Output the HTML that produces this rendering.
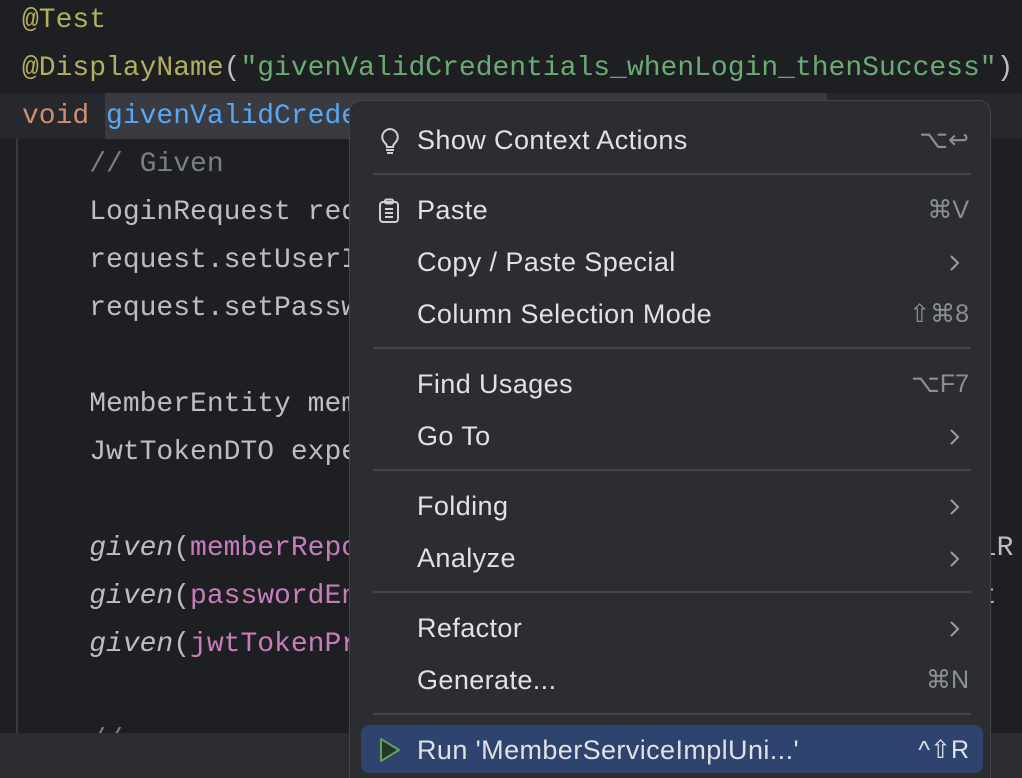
<!DOCTYPE html>
<html style="width:1022px;height:778px;overflow:hidden"><head><meta charset="utf-8"><style>
*{margin:0;padding:0;box-sizing:border-box}
body{width:1022px;height:778px;overflow:hidden;background:#1e1f22;position:relative;font-family:"Liberation Mono",monospace}
.ln{position:absolute;left:22px;height:48px;line-height:48px;font-size:28px;color:#bcbec4;white-space:pre;overflow:hidden;width:1000px}
.an{color:#b3ae60}.st{color:#6aab73}.kw{color:#cf8e6d}.fn{color:#56a8f5}.cm{color:#7a7e85}.pu{color:#c77dbb}.it{font-style:italic}
#menu{position:absolute;left:349px;top:100px;width:642px;height:678px;background:#2b2d30;border:1px solid #43454a;border-bottom:none;border-radius:12px 12px 0 0;font-family:"Liberation Sans",sans-serif}
.mi{position:absolute;left:0;width:640px;height:48px;line-height:48px;font-size:27px;letter-spacing:0.4px;color:#dfe1e5}
.mi .t{position:absolute;left:67px}
.mi .k{position:absolute;right:21px;color:#8c8f94;font-size:25px;letter-spacing:0}
.mi svg.ch{position:absolute;right:30px;top:15px}
.sep{position:absolute;left:23px;width:598px;height:2px;background:#43454a}
</style></head><body>
<div style="position:absolute;left:0;top:93px;width:1022px;height:46px;background:#26282e"></div>
<div style="position:absolute;left:105px;top:93px;width:722px;height:46px;background:#393b40"></div>
<div style="position:absolute;left:16px;top:139px;width:2px;height:594px;background:#393b40"></div>
<div class="ln" style="top:-3px"><span class="an">@Test</span></div>
<div class="ln" style="top:45px"><span class="an">@DisplayName</span>(<span class="st">"givenValidCredentials_whenLogin_thenSuccess"</span>)</div>
<div class="ln" style="top:93px"><span class="kw">void </span><span class="fn">givenValidCredentials_whenLogin_thenSuccess</span>() {</div>
<div class="ln" style="top:141px"><span class="cm">    // Given</span></div>
<div class="ln" style="top:189px">    LoginRequest request = new LoginRequest();</div>
<div class="ln" style="top:237px">    request.setUserId("testUser");</div>
<div class="ln" style="top:285px">    request.setPassword("password");</div>
<div class="ln" style="top:381px">    MemberEntity member = MemberEntity.builder();</div>
<div class="ln" style="top:429px">    JwtTokenDTO expected = new JwtTokenDTO();</div>
<div class="ln" style="top:525px">    <span class="it">given</span>(<span class="pu">memberRepository</span>.findByUserId(anyString())).willR</div>
<div class="ln" style="top:573px">    <span class="it">given</span>(<span class="pu">passwordEncoder</span>.matches(anyString(), memberEntit</div>
<div class="ln" style="top:621px">    <span class="it">given</span>(<span class="pu">jwtTokenProvider</span>.generateToken(anyString()).Re</div>
<div class="ln" style="top:717px"><span class="cm">    // ...</span></div>
<div style="position:absolute;left:0;top:733px;width:1022px;height:45px;background:#2b2d30"></div>
<div id="menu">
 <div class="mi" style="top:15px">
  <svg style="position:absolute;left:28px;top:11px" width="24" height="28" viewBox="0 0 24 28" fill="none" stroke="#cfd1d6" stroke-width="2"><path d="M12 2a8 8 0 0 0-5 14c1 1 2 2 2 4h6c0-2 1-3 2-4a8 8 0 0 0-5-14z"/><path d="M8 23h8M9 26h6"/></svg>
  <span class="t">Show Context Actions</span><span class="k">⌥↩</span></div>
 <div class="sep" style="top:72px"></div>
 <div class="mi" style="top:85px">
  <svg style="position:absolute;left:28px;top:12px" width="22" height="26" viewBox="0 0 22 26" fill="none" stroke="#cfd1d6" stroke-width="2"><rect x="2" y="4" width="18" height="20" rx="3"/><rect x="7" y="1.5" width="8" height="4" rx="1.5"/><path d="M7 11h8M7 15h8M7 19h8"/></svg>
  <span class="t">Paste</span><span class="k">⌘V</span></div>
 <div class="mi" style="top:137px"><span class="t">Copy / Paste Special</span><svg class="ch" width="12" height="20" viewBox="0 0 12 20" fill="none" stroke="#9a9da2" stroke-width="2"><path d="M3 3l7 7-7 7"/></svg></div>
 <div class="mi" style="top:189px"><span class="t">Column Selection Mode</span><span class="k">⇧⌘8</span></div>
 <div class="sep" style="top:246px"></div>
 <div class="mi" style="top:259px"><span class="t">Find Usages</span><span class="k">⌥F7</span></div>
 <div class="mi" style="top:311px"><span class="t">Go To</span><svg class="ch" width="12" height="20" viewBox="0 0 12 20" fill="none" stroke="#9a9da2" stroke-width="2"><path d="M3 3l7 7-7 7"/></svg></div>
 <div class="sep" style="top:368px"></div>
 <div class="mi" style="top:381px"><span class="t">Folding</span><svg class="ch" width="12" height="20" viewBox="0 0 12 20" fill="none" stroke="#9a9da2" stroke-width="2"><path d="M3 3l7 7-7 7"/></svg></div>
 <div class="mi" style="top:433px"><span class="t">Analyze</span><svg class="ch" width="12" height="20" viewBox="0 0 12 20" fill="none" stroke="#9a9da2" stroke-width="2"><path d="M3 3l7 7-7 7"/></svg></div>
 <div class="sep" style="top:490px"></div>
 <div class="mi" style="top:503px"><span class="t">Refactor</span><svg class="ch" width="12" height="20" viewBox="0 0 12 20" fill="none" stroke="#9a9da2" stroke-width="2"><path d="M3 3l7 7-7 7"/></svg></div>
 <div class="mi" style="top:555px"><span class="t">Generate...</span><span class="k">⌘N</span></div>
 <div class="sep" style="top:612px"></div>
 <div style="position:absolute;left:11px;top:624px;width:622px;height:48px;background:#2e436e;border-radius:8px"></div>
 <div class="mi" style="top:625px">
  <svg style="position:absolute;left:28px;top:11px" width="24" height="26" viewBox="0 0 24 26"><path d="M3 2L21 13L3 24Z" fill="#253627" stroke="#5fa35f" stroke-width="2" stroke-linejoin="round"/></svg>
  <span class="t">Run 'MemberServiceImplUni...'</span><span class="k" style="color:#dfe1e5">^⇧R</span></div>
</div>
</body></html>
